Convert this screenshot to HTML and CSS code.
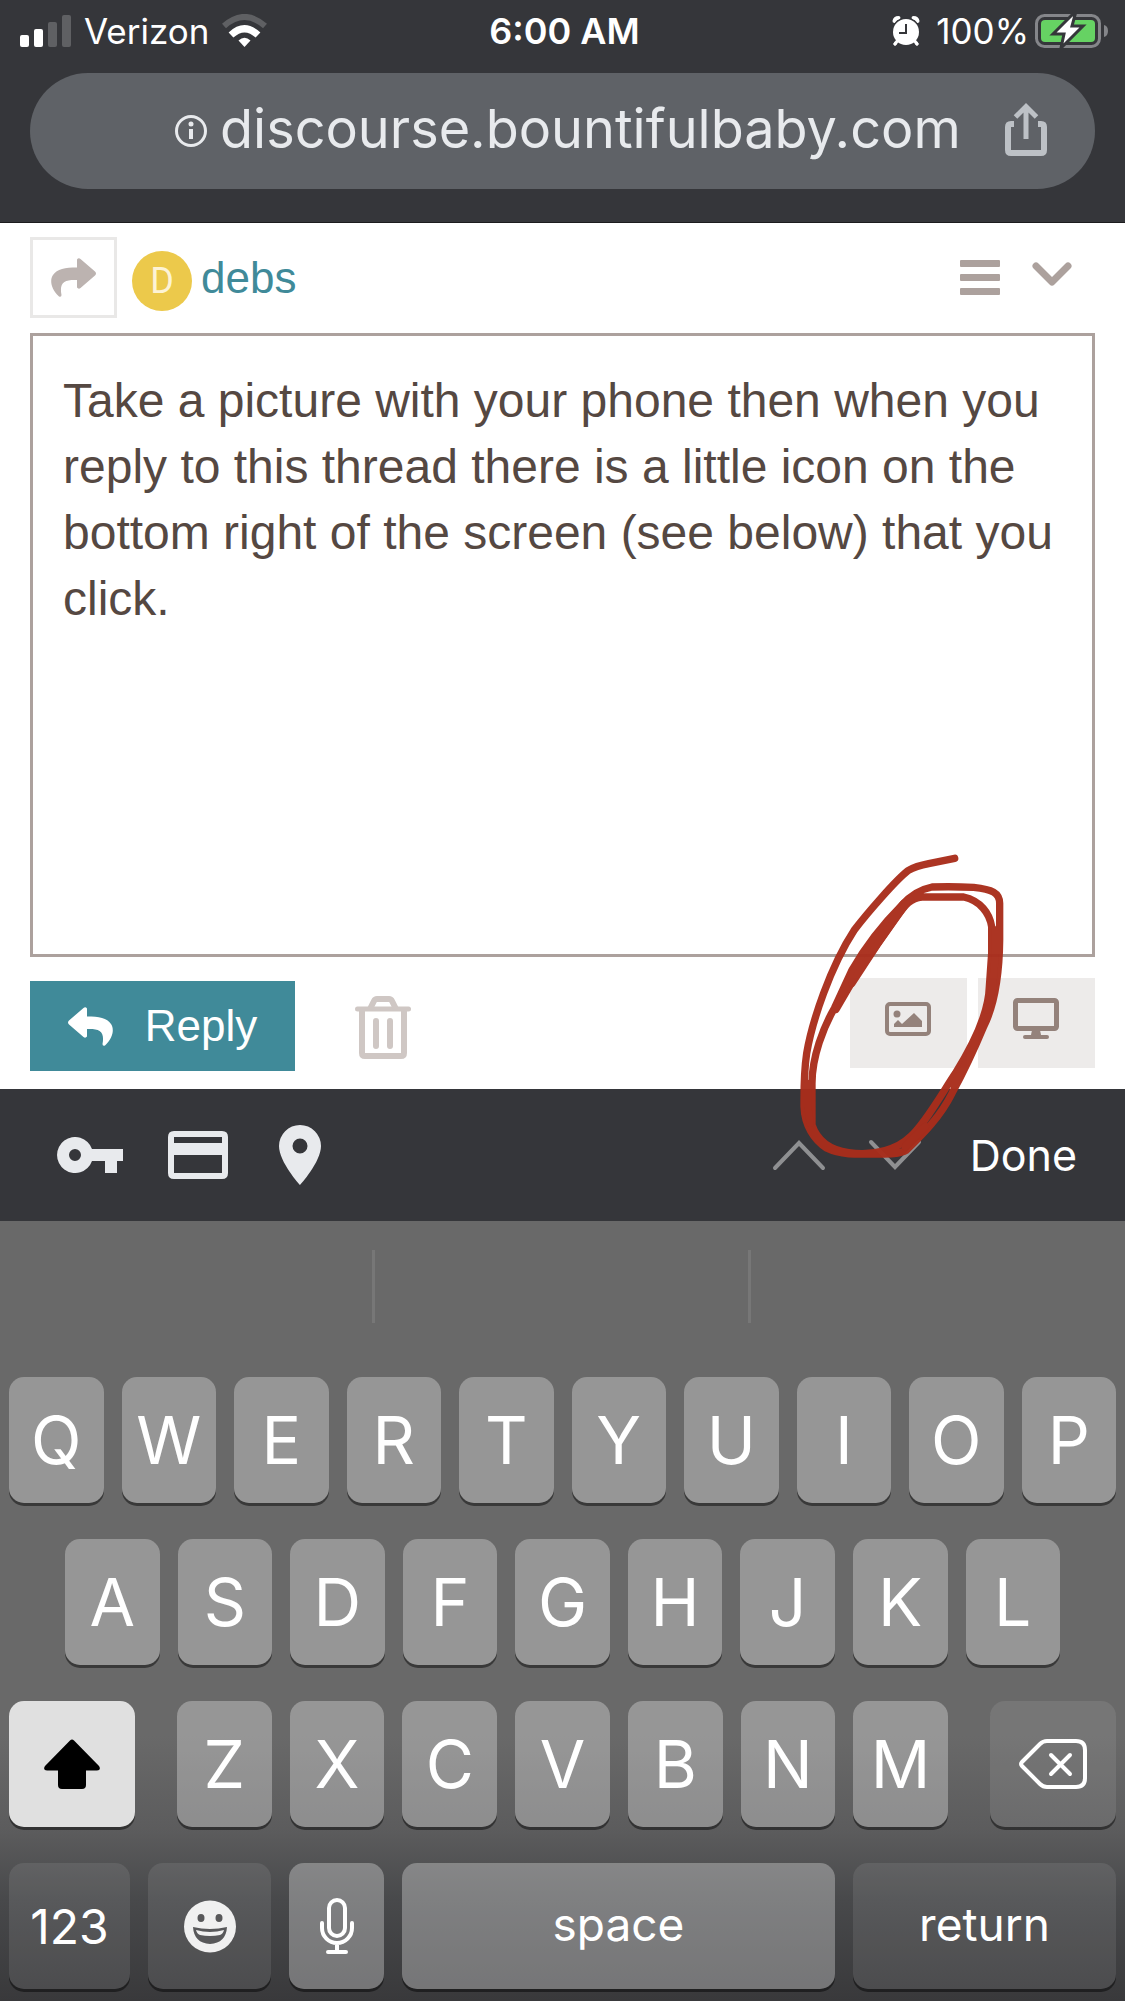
FILE: index.html
```html
<!DOCTYPE html>
<html lang="en">
<head>
  <meta charset="utf-8">
  <meta name="viewport" content="width=device-width, initial-scale=1">
  <title>discourse.bountifulbaby.com</title>
  <link rel="stylesheet" href="styles.css">
</head>
<body>
  <header class="browser">
    <div class="status">
      <div class="status-left">
        <svg width="51" height="32" viewBox="0 0 51 32" fill="#fff">
          <rect x="0" y="20" width="9" height="12" rx="2"/>
          <rect x="14" y="14" width="9" height="18" rx="2"/>
          <rect x="28" y="7" width="9" height="25" rx="2" fill="#5f6063"/>
          <rect x="42" y="0" width="9" height="32" rx="2" fill="#5f6063"/>
        </svg>
        <span>Verizon</span>
        <svg width="45" height="34" viewBox="0 0 45 34">
          <path d="M2 12Q22.500 -6 43 12" fill="none" stroke="#5f6063" stroke-width="6"/>
          <path d="M9 21Q22.500 8.500 36 21" fill="none" stroke="#fff" stroke-width="7"/>
          <path d="M16.500 26.500Q22.500 21 28.500 26.500L22.500 33Z" fill="#fff"/>
        </svg>
      </div>
      <span class="clock">6:00 AM</span>
      <div class="status-right">
        <svg class="alarm" width="28" height="30" viewBox="0 0 28 30">
          <g stroke="#fff" stroke-width="3" stroke-linecap="round" fill="none">
            <path d="M2.500 5Q3 2 6.500 2M25.500 5Q25 2 21.500 2" stroke-width="4"/>
            <path d="M6 24L3 28M22 24L25 28"/>
          </g>
          <circle cx="14" cy="16" r="14.500" fill="#35363a"/>
          <path d="M6 24L3 28M22 24L25 28" stroke="#fff" stroke-width="3" stroke-linecap="round"/>
          <circle cx="14" cy="16" r="13" fill="#fff"/>
          <path d="M14 8V17H7" fill="none" stroke="#35363a" stroke-width="2"/>
        </svg>
        <span>100%</span>
        <svg width="74" height="34" viewBox="0 0 74 34">
          <rect x="1.500" y="1.500" width="63" height="31" rx="8" fill="none" stroke="#85868a" stroke-width="3"/>
          <path d="M69 11Q73 12 73 17T69 23Z" fill="#85868a"/>
          <rect x="6" y="6" width="54" height="22" rx="4" fill="#66d263"/>
          <path d="M37 1L18 20H29L26 34L48 12H37L40 1Z" fill="#fff" stroke="#35363a" stroke-width="3"/>
        </svg>
      </div>
    </div>
    <div class="omnibox">
      <button class="url">
        <svg width="34" height="34" viewBox="0 0 34 34" fill="none" stroke="#e8eaed">
          <circle cx="17" cy="17" r="14.500" stroke-width="3"/>
          <path d="M17 15V25" stroke-width="4"/>
          <circle cx="17" cy="10" r="2.500" fill="#e8eaed" stroke="none"/>
        </svg>
        <span>discourse.bountifulbaby.com</span>
      </button>
      <button class="share" aria-label="Share">
        <svg width="42" height="54" viewBox="0 0 42 54" fill="none" stroke="#bdc1c6" stroke-width="6">
          <path d="M9 22H6Q3 22 3 25V48Q3 51 6 51H36Q39 51 39 48V25Q39 22 36 22H33"/>
          <path d="M21 37V5M10.500 15L21 4.500L31.500 15" stroke-width="5"/>
        </svg>
      </button>
    </div>
  </header>

  <main class="composer">
    <div class="reply-to">
      <button class="action" aria-label="Reply options">
        <svg width="45" height="39" viewBox="0 0 45 39" fill="#bcb3b0">
          <path d="M26 1.500Q27.500 -.5 29.500 1L44 13.500Q46 15.500 44 17.500L29.500 30Q27.500 31.500 26 29.500V22C14 21.500 8 24 10.500 37Q10.500 39.500 8 38.500C-1 30 -1 21 2 17C6 11 14 9.500 26 9.500Z"/>
        </svg>
      </button>
      <span class="avatar">D</span>
      <a href="#" class="username">debs</a>
      <button class="menu" aria-label="Menu">
        <svg width="40" height="36" viewBox="0 0 40 36" fill="#aca19d">
          <rect width="40" height="7" rx="1"/>
          <rect y="14" width="40" height="7" rx="1"/>
          <rect y="28" width="40" height="7" rx="1"/>
        </svg>
      </button>
      <button class="collapse" aria-label="Collapse">
        <svg width="40" height="25" viewBox="0 0 40 25">
          <path d="M4 4L20 20L36 4" fill="none" stroke="#aca19d" stroke-width="7" stroke-linecap="round" stroke-linejoin="round"/>
        </svg>
      </button>
    </div>

    <textarea class="editor" aria-label="Reply text">Take a picture with your phone then when you reply to this thread there is a little icon on the bottom right of the screen (see below) that you click.</textarea>

    <div class="submit">
      <button class="reply">
        <svg width="45" height="39" viewBox="0 0 45 39" fill="#fff">
          <path d="M19 1.500Q17.500 -.5 15.500 1L1 13.500Q-1 15.500 1 17.500L15.500 30Q17.500 31.500 19 29.500V22C31 21.500 37 24 34.500 37Q34.500 39.500 37 38.500C46 30 46 21 43 17C39 11 31 9.500 19 9.500Z"/>
        </svg>
        Reply
      </button>
      <button class="discard" aria-label="Discard">
        <svg width="56" height="64" viewBox="0 0 56 64" fill="none" stroke="#cfc7c4" stroke-width="6">
          <path d="M2.500 13H53.500" stroke-width="5" stroke-linecap="round"/>
          <path d="M15 13L19 5Q20 3 22 3H34Q36 3 37 5L41 13"/>
          <path d="M7 13V57Q7 60 10 60H46Q49 60 49 57V13"/>
          <path d="M21 25V50M35 25V50" stroke-linecap="round"/>
        </svg>
      </button>
      <div class="tools">
        <button class="tool" aria-label="Upload image">
          <svg width="46" height="34" viewBox="0 0 46 34" fill="#94827b">
            <rect x="2" y="2" width="42" height="30" rx="3" fill="none" stroke="#94827b" stroke-width="4"/>
            <circle cx="12" cy="12" r="3.500"/>
            <path d="M9 25V22L13 18L17 22L29 11L37 19V25Z"/>
          </svg>
        </button>
        <button class="tool" aria-label="Desktop preview">
          <svg width="46" height="42" viewBox="0 0 46 42" fill="#94827b">
            <rect x="2.500" y="2.500" width="41" height="28" rx="2" fill="none" stroke="#94827b" stroke-width="5"/>
            <path d="M19 32H27L28 37H18Z"/>
            <rect x="10" y="37" width="26" height="4" rx="2"/>
          </svg>
        </button>
      </div>
    </div>

    <!-- hand drawn circle round the upload button -->
    <svg class="scribble" width="363" height="390" viewBox="0 0 1089 1170" fill="none" stroke="#a92d1b" stroke-width="22" stroke-linecap="round" stroke-linejoin="round">
      <path d="M578 55L500 71Q462 78 438 92C400 122 315 220 277 270C205 380 150 545 134 640C125 700 126 740 126 800C128 855 155 900 195 925C235 945 290 943 330 942C375 942 410 944 434 930C485 880 535 830 570 760C600 705 640 620 665 560C700 490 712 400 713 300V190C713 158 690 148 635 142Q570 139 510 141C465 150 440 172 420 195C355 260 310 320 270 390L217 505C185 560 150 650 150 730V855C165 900 200 930 260 938C340 950 410 925 445 890C490 850 540 760 580 700C630 620 680 520 682 440L689 340V260C683 220 655 182 605 171H480C445 174 430 195 400 235L285 400L222 508"/>
      <path d="M445 178L425 190L350 280L290 370L240 460"/>
      <path d="M432 192L345 315L270 430"/>
      <path d="M137 730V800L145 850"/>
      <path d="M430 920L490 860"/>
      <path d="M575 735L625 645"/>
      <path d="M700 270V340L692 440L675 510"/>
    </svg>
  </main>

  <nav class="accessory">
    <button class="key-icon" aria-label="Passwords">
      <svg width="66" height="36" viewBox="0 0 66 36" fill="#e8eaed">
        <path fill-rule="evenodd" d="M35 12H66V24H60V36H48V24H35A18 18 0 1 1 35 12ZM18 12A6 6 0 1 0 18 24A6 6 0 1 0 18 12Z"/>
      </svg>
    </button>
    <button class="card-icon" aria-label="Payment methods">
      <svg width="60" height="48" viewBox="0 0 60 48" fill="#e8eaed">
        <path fill-rule="evenodd" d="M6 0H54Q60 0 60 6V42Q60 48 54 48H6Q0 48 0 42V6Q0 0 6 0ZM6 6V12H54V6ZM6 24V42H54V24Z"/>
      </svg>
    </button>
    <button class="pin-icon" aria-label="Addresses">
      <svg width="42" height="60" viewBox="0 0 42 60" fill="#e8eaed">
        <path fill-rule="evenodd" d="M21 0A21 21 0 0 1 42 21C42 37 21 60 21 60S0 37 0 21A21 21 0 0 1 21 0ZM21 13.500A7.500 7.500 0 1 0 21 28.500A7.500 7.500 0 1 0 21 13.500Z"/>
      </svg>
    </button>
    <button class="prev" aria-label="Previous field">
      <svg width="54" height="32" viewBox="0 0 54 32" fill="none" stroke="#8f9092" stroke-width="4" stroke-linecap="round">
        <path d="M3 29L27 4L51 29"/>
      </svg>
    </button>
    <button class="next" aria-label="Next field">
      <svg width="54" height="32" viewBox="0 0 54 32" fill="none" stroke="#8f9092" stroke-width="4" stroke-linecap="round">
        <path d="M3 3L27 28L51 3"/>
      </svg>
    </button>
    <button class="done">Done</button>
  </nav>

  <section class="keyboard">
    <div class="suggestions">
      <span></span>
      <span></span>
      <span></span>
    </div>
    <div class="row">
      <button>Q</button>
      <button>W</button>
      <button>E</button>
      <button>R</button>
      <button>T</button>
      <button>Y</button>
      <button>U</button>
      <button>I</button>
      <button>O</button>
      <button>P</button>
    </div>
    <div class="row row-home">
      <button>A</button>
      <button>S</button>
      <button>D</button>
      <button>F</button>
      <button>G</button>
      <button>H</button>
      <button>J</button>
      <button>K</button>
      <button>L</button>
    </div>
    <div class="row">
      <button class="shift" aria-label="Shift">
        <svg width="58" height="50" viewBox="0 0 58 50">
          <path d="M27 1.500Q29 -.5 31 1.500L56 27Q58.500 31 54 31.500H43V46Q43 50 39 50H19Q15 50 15 46V31.500H4Q-.5 31 2 27Z"/>
        </svg>
      </button>
      <button>Z</button>
      <button>X</button>
      <button>C</button>
      <button>V</button>
      <button>B</button>
      <button>N</button>
      <button>M</button>
      <button class="delete dark" aria-label="Delete">
        <svg width="68" height="50" viewBox="0 0 68 50" fill="none" stroke="#fff" stroke-width="4" stroke-linecap="round" stroke-linejoin="round">
          <path d="M28 2H57Q66 2 66 11V39Q66 48 57 48H28Q24 48 21 45L3 27Q1 25 3 23L21 5Q24 2 28 2Z"/>
          <path d="M32 16L51 35M51 16L32 35"/>
        </svg>
      </button>
    </div>
    <div class="row row-bottom">
      <button class="dark numbers">123</button>
      <button class="dark" aria-label="Emoji">
        <svg width="52" height="53" viewBox="0 0 52 53">
          <circle cx="26" cy="26.500" r="26" fill="#f0f0f0"/>
          <ellipse cx="17" cy="18" rx="3.500" ry="4" fill="#58585a"/>
          <ellipse cx="35" cy="18" rx="3.500" ry="4" fill="#58585a"/>
          <path d="M9 27Q26 31 43 27Q42 43 26 44Q10 43 9 27Z" fill="#58585a"/>
          <path d="M12 30Q26 34 40 30Q39 34 36 35Q26 37 16 35Q13 34 12 30Z" fill="#f0f0f0"/>
        </svg>
      </button>
      <button aria-label="Dictate">
        <svg width="34" height="56" viewBox="0 0 34 56" fill="none" stroke="#fff" stroke-width="4" stroke-linecap="round">
          <rect x="9" y="2" width="16" height="36" rx="8"/>
          <path d="M2 25V30A15 15 0 0 0 32 30V25M17 46V54M8 54H26"/>
        </svg>
      </button>
      <button class="word">space</button>
      <button class="dark word">return</button>
    </div>
  </section>
</body>
</html>
```
FILE: styles.css
```css
* {
  box-sizing: border-box;
}
body {
  margin: 0;
  min-height: 100vh;
  display: flex;
  flex-direction: column;
  background: #fff;
  font-family: Inter, sans-serif;
}
button {
  display: flex;
  align-items: center;
  justify-content: center;
  flex-shrink: 0;
  margin: 0;
  padding: 0;
  border: none;
  background: none;
  color: #fff;
  font-family: inherit;
  cursor: pointer;
}
svg {
  display: block;
  flex-shrink: 0;
}

/* status bar + address bar */
.browser {
  padding-bottom: 33px;
  background: #35363a;
  border-bottom: 1px solid #1c1c1e;
}
.status {
  display: grid;
  grid-template-columns: 1fr auto 1fr;
  align-items: center;
  height: 73px;
  padding: 0 16px 12px 20px;
  font-size: 35px;
  line-height: 44px;
  color: #fff;
}
.status-left,
.status-right {
  display: flex;
  align-items: center;
  gap: 13px;
}
.status-right {
  justify-content: flex-end;
  gap: 6px;
}
.alarm {
  margin-right: 10px;
}
.clock {
  font-size: 36px;
  font-weight: 600;
}
.omnibox {
  display: flex;
  align-items: center;
  height: 116px;
  margin: 0 30px;
  padding: 0 48px 4px 144px;
  border-radius: 58px;
  background: #5f6267;
}
.url {
  flex: 1;
  gap: 12px;
  justify-content: flex-start;
  font-size: 54px;
  line-height: 64px;
  color: #e8eaed;
}
.url svg {
  margin-top: 4px;
}

/* composer */
.composer {
  position: relative;
  flex: 1;
  display: flex;
  flex-direction: column;
  padding: 14px 30px 18px;
  font-family: "Liberation Sans", Arial, sans-serif;
}
.reply-to {
  display: flex;
  align-items: center;
  height: 81px;
  margin-bottom: 15px;
}
.action {
  width: 87px;
  height: 81px;
  border: 3px solid #e9e8e7;
}
.avatar {
  width: 60px;
  height: 60px;
  margin: 6px 9px 0 15px;
  border-radius: 50%;
  background: #ecc94b;
  color: #fdf3d5;
  font-family: Roboto, sans-serif;
  font-size: 36px;
  line-height: 60px;
  text-align: center;
}
.username {
  color: #408a99;
  font-size: 44px;
  text-decoration: none;
}
.menu {
  margin-left: auto;
}
.collapse {
  margin: 0 23px 6px 32px;
}
.editor {
  flex: 1;
  width: 100%;
  padding: 32px 30px;
  border: 3px solid #aca19d;
  border-radius: 0;
  outline: none;
  resize: none;
  overflow: hidden;
  background: #fff;
  color: #554842;
  font-family: inherit;
  font-size: 48px;
  line-height: 66px;
}
.submit {
  display: flex;
  align-items: flex-end;
  margin-top: 21px;
  height: 93px;
}
.reply {
  width: 265px;
  height: 90px;
  gap: 32px;
  background: #408a99;
  font-size: 44px;
}
.discard {
  margin: 0 0 11px 60px;
}
.tools {
  display: flex;
  align-self: flex-start;
  gap: 11px;
  margin-left: auto;
}
.tool {
  width: 117px;
  height: 90px;
  padding: 0 2px 9px 0;
  background: #edebea;
}
.scribble {
  position: absolute;
  right: 0;
  bottom: -141px;
  z-index: 1;
  opacity: .96;
  pointer-events: none;
}

/* form accessory bar */
.accessory {
  display: flex;
  align-items: center;
  height: 132px;
  padding: 0 48px 0 57px;
  background: #35363a;
}
.card-icon {
  margin: 0 51px 0 45px;
}
.prev {
  margin-left: auto;
}
.next {
  margin: 0 48px 0 42px;
}
.done {
  font-size: 43px;
}

/* keyboard */
.keyboard {
  display: flex;
  flex-direction: column;
  gap: 36px;
  padding: 29px 9px 12px;
  background: linear-gradient(#696969 0, #696969 66%, #5c5c5d 78%, #48494b 87%, #39393b 100%);
}
.suggestions {
  display: flex;
  height: 73px;
  margin: 0 -8px 18px -10px;
}
.suggestions span {
  flex: 1;
  border-right: 3px solid #777;
}
.suggestions span:last-child {
  border: none;
}
.row {
  display: flex;
  gap: 18px;
}
.row-home {
  padding: 0 56px;
}
.row button {
  flex: 1;
  height: 126px;
  border-radius: 15px;
  background: rgba(255, 255, 255, .3);
  box-shadow: 0 3px 0 rgba(0, 0, 0, .45);
  font-size: 66px;
}
.row .dark {
  background: rgba(255, 255, 255, .09);
}
.row .shift {
  flex: 0 0 126px;
  margin-right: 24px;
  background: #e0e0e0;
}
.row .delete {
  flex: 0 0 126px;
  margin-left: 24px;
}
.row-bottom {
  display: grid;
  grid-template-columns: 121fr 123fr 95fr 433fr 263fr;
}
.row .numbers {
  font-size: 48px;
}
.row .word {
  padding-bottom: 4px;
  font-size: 46px;
}
```
